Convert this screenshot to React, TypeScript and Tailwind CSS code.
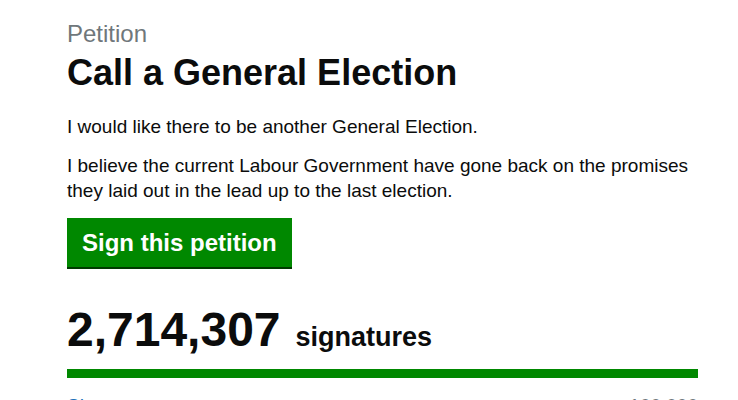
import React from "react";

/* ─── Petition data ─── */
const PETITION = {
  title: "Call a General Election",
  summary: "I would like there to be another General Election.",
  detail:
    "I believe the current Labour Government have gone back on the promises they laid out in the lead up to the last election.",
  signatures: 2714307,
  target: 100000,
};

export default function App() {
  return (
    <div
      className="min-h-[400px] bg-white text-[#0b0c0c]"
      style={{ fontFamily: '"Liberation Sans", Arial, sans-serif' }}
    >
      <main className="ml-[67px] w-[631px] pt-[19px]">
        <span className="block text-[24px] leading-[30px] text-[#6f777b]">
          Petition
        </span>
        <h1 className="mt-[4px] text-[36px] leading-[40px] font-bold">
          {PETITION.title}
        </h1>

        <p className="mt-[21px] text-[19px] leading-[25px]">{PETITION.summary}</p>
        <p className="mt-[14px] text-[19px] leading-[25px]">{PETITION.detail}</p>

        <button
          type="button"
          className="mt-[15px] h-[49px] px-[15px] bg-[#008800] text-white text-[24px] font-bold leading-[49px] shadow-[0_2px_0_#003a00]"
        >
          Sign this petition
        </button>

        <div className="mt-[38px] flex items-baseline gap-[15px]">
          <span className="text-[48px] leading-[50px] font-bold">
            {PETITION.signatures.toLocaleString("en-GB")}
          </span>
          <span className="text-[27px] font-bold">signatures</span>
        </div>

        <div className="mt-[11px] h-[9px] w-full bg-[#008800]" />

        <div className="mt-[15px] flex justify-between text-[19px] leading-[25px]">
          <a href="#" className="text-[#1d70b8] underline">
            Show on a map
          </a>
          <span className="text-[#6f777b]">
            {PETITION.target.toLocaleString("en-GB")}
          </span>
        </div>
      </main>
    </div>
  );
}
